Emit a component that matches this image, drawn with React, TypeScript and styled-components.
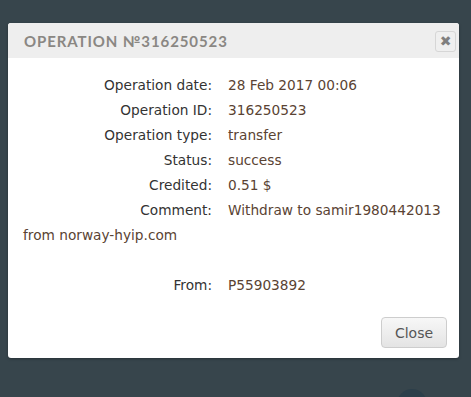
import styled, { createGlobalStyle } from "styled-components";

const GlobalStyle = createGlobalStyle`
  html, body {
    margin: 0;
    padding: 0;
    background: #37454c;
    height: 100%;
    overflow: hidden;
  }
`;

const rows: { label: string; value: string }[] = [
  { label: "Operation date:", value: "28 Feb 2017 00:06" },
  { label: "Operation ID:", value: "316250523" },
  { label: "Operation type:", value: "transfer" },
  { label: "Status:", value: "success" },
  { label: "Credited:", value: "0.51 $" },
  { label: "Comment:", value: "Withdraw to samir1980442013" },
];

export default function App() {
  return (
    <>
      <GlobalStyle />
      <Page>
        <Modal>
          <Header>
            <Title>Operation №316250523</Title>
            <CloseX aria-label="close">✖</CloseX>
          </Header>
          <Body>
            {rows.map((r) => (
              <Row key={r.label}>
                <Label>{r.label}</Label>
                <Value>{r.value}</Value>
              </Row>
            ))}
            <Wrapped>from norway-hyip.com</Wrapped>
            <Blank />
            <Row>
              <Label>From:</Label>
              <Value>P55903892</Value>
            </Row>
          </Body>
          <Footer>
            <Button>Close</Button>
          </Footer>
        </Modal>
        <Bubble />
      </Page>
    </>
  );
}

const Page = styled.div`
  position: relative;
  width: 471px;
  height: 397px;
  padding: 23px 0 0 8px;
  box-sizing: border-box;
  overflow: hidden;
  font-family: "DejaVu Sans", "Open Sans", sans-serif;
`;

const Modal = styled.div`
  width: 451px;
  height: 335px;
  background: #fff;
  border-radius: 3px;
  display: flex;
  flex-direction: column;
  overflow: hidden;
  box-shadow: 0 1px 3px rgba(0, 0, 0, 0.3);
`;

const Header = styled.div`
  height: 35px;
  background: #eeeeee;
  display: flex;
  align-items: center;
  justify-content: space-between;
  padding: 0 3px 0 16px;
`;

const Title = styled.h3`
  margin: 0;
  font-family: Lato, "DejaVu Sans", sans-serif;
  font-size: 15px;
  font-weight: 700;
  letter-spacing: 0.9px;
  text-transform: uppercase;
  color: #8a8783;
`;

const CloseX = styled.button`
  width: 21px;
  height: 21px;
  padding: 0;
  border: 1px solid #d6d6d6;
  border-radius: 3px;
  background: #efefef;
  color: #7f7f7f;
  font-size: 14px;
  line-height: 19px;
  font-family: "DejaVu Sans", sans-serif;
  margin-top: 1px;
`;

const Body = styled.div`
  flex: 1;
  padding: 15px 15px 0;
  font-size: 13.7px;
  line-height: 25px;
`;

const Row = styled.div`
  display: flex;
  gap: 16px;
`;

const Label = styled.span`
  width: 189px;
  text-align: right;
  color: #333;
  flex-shrink: 0;
`;

const Value = styled.span`
  color: #5a4333;
  white-space: nowrap;
`;

const Wrapped = styled.div`
  color: #5a4333;
`;

const Blank = styled.div`
  height: 25px;
`;

const Footer = styled.div`
  display: flex;
  justify-content: flex-end;
  padding: 0 12px 10px;
`;

const Button = styled.button`
  width: 66px;
  height: 31px;
  border: 1px solid #cdcdcd;
  border-radius: 4px;
  background: linear-gradient(#f7f7f7, #e4e4e4);
  color: #555;
  font-family: "DejaVu Sans", sans-serif;
  font-size: 14px;
`;

const Bubble = styled.div`
  position: absolute;
  left: 397px;
  top: 389px;
  width: 30px;
  height: 30px;
  border-radius: 50%;
  background: #2c3f4a;
`;
